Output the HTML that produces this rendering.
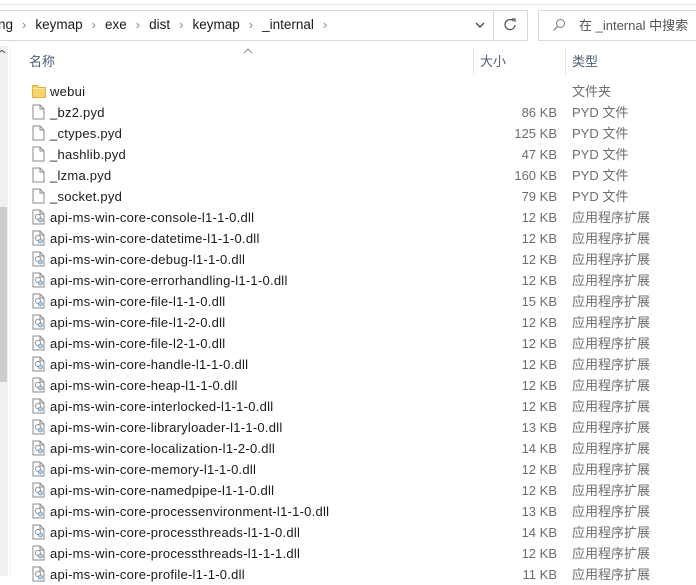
<!DOCTYPE html>
<html><head><meta charset="utf-8"><style>
*{margin:0;padding:0;box-sizing:border-box}
body{width:696px;height:576px;overflow:hidden;background:#fff;font-family:"Liberation Sans","Noto Sans CJK SC",sans-serif;font-size:13px;color:#1a1a1a;position:relative}
.abs{position:absolute}
.row{position:absolute;left:0;width:696px;height:21px}
.row span{line-height:15px;height:15px;display:block}
.row .ic{position:absolute;left:32px;top:2px;height:16px}
.row .n{position:absolute;left:50px;top:3px;white-space:nowrap;letter-spacing:0.25px}
.row .s{position:absolute;right:139px;top:3px;color:#6d6d6d}
.row .t{position:absolute;left:572px;top:3px;color:#6d6d6d}
.sep{display:inline-block;color:#888;margin:0 9px;font-size:13px}
</style></head><body>
<div class="abs" style="left:0;top:4px;width:696px;height:1px;background:#e5e5e5"></div>
<div class="abs" style="left:-2px;top:10px;width:530px;height:31px;border:1px solid #d9d9d9"></div>
<div class="abs" style="left:493px;top:10px;width:1px;height:31px;background:#d9d9d9"></div>
<div class="abs" style="left:-2px;top:16px;font-size:13.5px;line-height:17px;white-space:nowrap;color:#1a1a1a">ng<span class="sep">›</span>keymap<span class="sep">›</span>exe<span class="sep">›</span>dist<span class="sep">›</span>keymap<span class="sep">›</span>_internal<span class="sep">›</span></div>
<svg class="abs" style="left:475px;top:21px" width="10" height="8"><path d="M1 2l4 4 4-4" stroke="#555" stroke-width="1.5" fill="none"/></svg>
<svg class="abs" style="left:503px;top:17px" width="14" height="14"><path d="M10.5 4A5 5 0 1 0 12 8" stroke="#555" stroke-width="1.3" fill="none"/><path d="M9 2h3v3" stroke="#555" stroke-width="1.3" fill="none"/></svg>
<div class="abs" style="left:538px;top:10px;width:160px;height:31px;border:1px solid #d9d9d9"></div>
<svg class="abs" style="left:552px;top:18px" width="14" height="14"><circle cx="8.5" cy="5.5" r="4" stroke="#777" stroke-width="1" fill="none"/><path d="M5.5 8.5L1.5 12.5" stroke="#777" stroke-width="1.2"/></svg>
<div class="abs" style="left:579px;top:17px;font-size:13px;line-height:17px;color:#555;white-space:nowrap">在 _internal 中搜索</div>
<div class="abs" style="left:0;top:46px;width:8px;height:530px;background:#f0f0f0"></div>
<div class="abs" style="left:0;top:207px;width:7px;height:175px;background:#cdcdcd"></div>
<div class="abs" style="left:10px;top:46px;width:1px;height:530px;background:#f2f2f2"></div>
<svg class="abs" style="left:0;top:50px" width="6" height="6"><path d="M0 2l2-2 3 3" stroke="#555" fill="none"/></svg>
<svg class="abs" style="left:243px;top:48px" width="10" height="6"><path d="M1 5l4-4 4 4" stroke="#888" fill="none"/></svg>
<div class="abs" style="left:29px;top:53px;color:#4c607a;font-size:13px;line-height:17px">名称</div>
<div class="abs" style="left:473px;top:48px;width:1px;height:27px;background:#e5e5e5"></div>
<div class="abs" style="left:480px;top:53px;color:#4c607a;font-size:13px;line-height:17px">大小</div>
<div class="abs" style="left:565px;top:48px;width:1px;height:27px;background:#e5e5e5"></div>
<div class="abs" style="left:572px;top:53px;color:#4c607a;font-size:13px;line-height:17px">类型</div>
<div id="rows"></div>
<script>
var F='<svg width="14" height="16"><path d="M1 1h7l4 4v10H1z" fill="#fff" stroke="#8a8a8a"/><path d="M8 1v4h4" fill="none" stroke="#8a8a8a"/></svg>';
var D='<svg width="14" height="16"><path d="M1 1h7l4 4v10H1z" fill="#fff" stroke="#8a8a8a"/><path d="M8 1v4h4" fill="none" stroke="#8a8a8a"/><circle cx="6" cy="8" r="2.6" fill="none" stroke="#999"/><circle cx="8.5" cy="11" r="2" fill="#bcd4ea" stroke="#6d8fb8" stroke-width=".8"/></svg>';
var W='<svg width="14" height="16"><path d="M0.5 2.5h5l1.5 2h6.5v10H0.5z" fill="#f7d46a" stroke="#e0b23c"/><path d="M0.5 5.5h13" stroke="#fce9a5"/></svg>';
var d=[["webui","","文件夹",W],["_bz2.pyd","86 KB","PYD 文件",F],["_ctypes.pyd","125 KB","PYD 文件",F],["_hashlib.pyd","47 KB","PYD 文件",F],["_lzma.pyd","160 KB","PYD 文件",F],["_socket.pyd","79 KB","PYD 文件",F],
["api-ms-win-core-console-l1-1-0.dll","12 KB"],["api-ms-win-core-datetime-l1-1-0.dll","12 KB"],["api-ms-win-core-debug-l1-1-0.dll","12 KB"],["api-ms-win-core-errorhandling-l1-1-0.dll","12 KB"],["api-ms-win-core-file-l1-1-0.dll","15 KB"],["api-ms-win-core-file-l1-2-0.dll","12 KB"],["api-ms-win-core-file-l2-1-0.dll","12 KB"],["api-ms-win-core-handle-l1-1-0.dll","12 KB"],["api-ms-win-core-heap-l1-1-0.dll","12 KB"],["api-ms-win-core-interlocked-l1-1-0.dll","12 KB"],["api-ms-win-core-libraryloader-l1-1-0.dll","13 KB"],["api-ms-win-core-localization-l1-2-0.dll","14 KB"],["api-ms-win-core-memory-l1-1-0.dll","12 KB"],["api-ms-win-core-namedpipe-l1-1-0.dll","12 KB"],["api-ms-win-core-processenvironment-l1-1-0.dll","13 KB"],["api-ms-win-core-processthreads-l1-1-0.dll","14 KB"],["api-ms-win-core-processthreads-l1-1-1.dll","12 KB"],["api-ms-win-core-profile-l1-1-0.dll","11 KB"]];
var h='';d.forEach(function(r,i){h+='<div class="row" style="top:'+(81+i*21)+'px"><span class="ic">'+(r[3]||D)+'</span><span class="n">'+r[0]+'</span><span class="s">'+r[1]+'</span><span class="t">'+(r[2]||"应用程序扩展")+'</span></div>'});
document.getElementById('rows').innerHTML=h;
</script>
</body></html>
